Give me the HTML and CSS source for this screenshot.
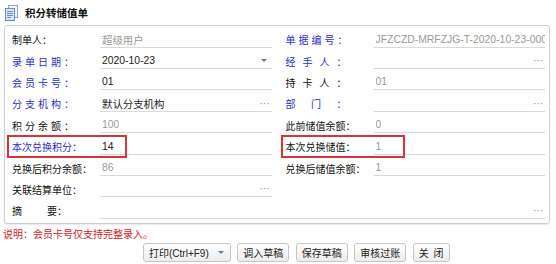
FILE: index.html
```html
<!DOCTYPE html>
<html lang="zh-CN">
<head>
  <meta charset="UTF-8">
  <title>积分转储值单</title>
  <link rel="stylesheet" href="styles.css">
</head>
<body>
  <div class="header">
    <svg class="doc-icon" viewBox="0 0 13 16">
      <rect x="3.5" y="0.5" width="9" height="12" fill="#eef3fa" stroke="#8ea6c9"/>
      <rect x="0.5" y="3.5" width="9" height="12" fill="#dce6f3" stroke="#6f8dbb"/>
      <path d="M2 6.5h6M2 8.5h6M2 10.5h6M2 12.5h4" stroke="#6f8dbb" stroke-width="1"/>
    </svg>
    <span class="title">积分转储值单</span>
  </div>

  <div class="panel">
    <div class="form">
      <div class="cell">
        <label class="lbl">制单人：</label>
        <div class="val ro"><span class="txt">超级用户</span></div>
      </div>
      <div class="cell">
        <label class="lbl req sp4">单据编号：</label>
        <div class="val ro clip"><span class="txt">JFZCZD-MRFZJG-T-2020-10-23-000</span></div>
      </div>

      <div class="cell">
        <label class="lbl req sp4">录单日期：</label>
        <div class="val"><span class="txt">2020-10-23</span><span class="caret"></span></div>
      </div>
      <div class="cell">
        <label class="lbl req sp3">经手人：</label>
        <div class="val"><span class="txt"></span><span class="more">···</span></div>
      </div>

      <div class="cell">
        <label class="lbl req sp4">会员卡号：</label>
        <div class="val"><span class="txt">01</span></div>
      </div>
      <div class="cell">
        <label class="lbl sp3">持卡人：</label>
        <div class="val ro"><span class="txt">01</span></div>
      </div>

      <div class="cell">
        <label class="lbl req sp4">分支机构：</label>
        <div class="val"><span class="txt">默认分支机构</span><span class="more">···</span></div>
      </div>
      <div class="cell">
        <label class="lbl req sp2">部门：</label>
        <div class="val"><span class="txt"></span><span class="more">···</span></div>
      </div>

      <div class="cell">
        <label class="lbl sp4">积分余额：</label>
        <div class="val ro"><span class="txt">100</span></div>
      </div>
      <div class="cell">
        <label class="lbl">此前储值余额：</label>
        <div class="val ro"><span class="txt">0</span></div>
      </div>

      <div class="cell">
        <label class="lbl req">本次兑换积分：</label>
        <div class="val"><span class="txt">14</span></div>
        <div class="mark"></div>
      </div>
      <div class="cell">
        <label class="lbl">本次兑换储值：</label>
        <div class="val ro"><span class="txt">1</span></div>
        <div class="mark mark-right"></div>
      </div>

      <div class="cell">
        <label class="lbl">兑换后积分余额：</label>
        <div class="val ro"><span class="txt">86</span></div>
      </div>
      <div class="cell">
        <label class="lbl">兑换后储值余额：</label>
        <div class="val ro"><span class="txt">1</span></div>
      </div>

      <div class="cell">
        <label class="lbl">关联结算单位：</label>
        <div class="val"><span class="txt"></span><span class="more">···</span></div>
      </div>
      <div class="cell blank"></div>

      <div class="cell wide">
        <label class="lbl">摘<i class="gap"></i>要：</label>
        <div class="val"><span class="txt"></span><span class="more">···</span></div>
      </div>
    </div>
  </div>

  <p class="note">说明：会员卡号仅支持完整录入。</p>

  <div class="actions">
    <button class="btn">打印(Ctrl+F9)<span class="caret btn-caret"></span></button>
    <button class="btn">调入草稿</button>
    <button class="btn">保存草稿</button>
    <button class="btn">审核过账</button>
    <button class="btn btn-close">关 闭</button>
  </div>
</body>
</html>
```

FILE: styles.css
```css
body {
  margin: 0;
  width: 556px;
  font-family: "Liberation Sans", "Noto Sans CJK SC", sans-serif;
  font-size: 10px;
  color: #222;
  background: #fff;
}
.header {
  display: flex;
  align-items: center;
  height: 25px;
  padding-left: 5px;
}
.doc-icon {
  width: 13px;
  height: 16px;
  margin-right: 7px;
}
.title {
  font-size: 10.5px;
  font-weight: bold;
  color: #111;
}
.panel {
  margin: 0 6px 0 4px;
  padding: 3px 4px 1px 7px;
  border: 1px solid #cfcfcf;
  border-radius: 3px;
  box-shadow: 0 1px 1px rgba(0, 0, 0, 0.08);
}
.form {
  display: grid;
  grid-template-columns: 1fr 1fr;
  grid-auto-rows: 21.4px;
  column-gap: 14px;
}
.cell {
  display: grid;
  grid-template-columns: 88px 1fr;
  align-items: center;
  position: relative;
}
.cell.wide {
  grid-column: 1 / -1;
}
.lbl {
  white-space: nowrap;
  color: #111;
}
.lbl.req {
  color: #2a30c6;
}
.sp4 {
  letter-spacing: 3px;
}
.sp3 {
  letter-spacing: 7px;
}
.sp2 {
  letter-spacing: 15.5px;
}
.gap {
  display: inline-block;
  width: 25px;
}
.val {
  display: flex;
  align-items: center;
  justify-content: space-between;
  height: 15px;
  padding: 0 2px 0 2px;
  border-bottom: 1px solid #d9d9d9;
  overflow: hidden;
  white-space: nowrap;
  font-size: 10.4px;
}
.val.clip {
  padding-right: 0;
  justify-content: flex-start;
}
.val .txt {
  overflow: hidden;
}
.val.ro {
  color: #9a9a9a;
}
.more {
  color: #7f8ea8;
  font-size: 10px;
  margin-left: 4px;
}
.caret {
  width: 0;
  height: 0;
  margin-right: 3px;
  border-left: 3px solid transparent;
  border-right: 3px solid transparent;
  border-top: 3px solid #6a7896;
}
.mark {
  position: absolute;
  left: -5px;
  top: -1px;
  width: 120px;
  height: 23px;
  box-sizing: border-box;
  border: 2px solid #d6333a;
  pointer-events: none;
}
.mark-right {
  left: -5px;
  width: 124px;
}
.note {
  margin: 4px 0 0 3px;
  line-height: 14px;
  color: #d0202a;
}
.actions {
  display: flex;
  gap: 6.5px;
  margin-top: 1px;
  padding-left: 143px;
}
.btn {
  display: flex;
  align-items: center;
  height: 19px;
  padding: 0 5px;
  box-sizing: border-box;
  border: 1px solid #c6c6c6;
  border-radius: 3px;
  background: linear-gradient(#ffffff, #ececec);
  font: inherit;
  color: #222;
}
.btn-caret {
  margin: 0 1px 0 9px;
}
.btn-close {
  word-spacing: 2px;
}
```
